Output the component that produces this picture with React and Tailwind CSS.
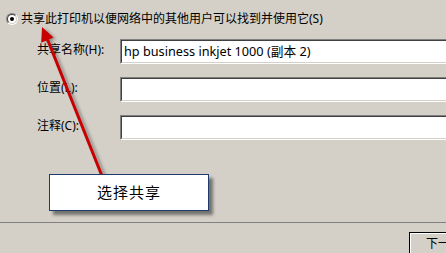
import React from "react";

const font = { fontFamily: '"Noto Sans", "Noto Sans CJK SC", sans-serif' };

function SunkenInput({ value }) {
  return (
    <div className="shrink-0 h-[25px] w-[340px] border-t border-l border-[#808080] border-b border-r border-b-white border-r-white">
      <div className="h-full w-full bg-white border-t border-l border-[#404040] border-b border-r border-b-[#d4d0c8] border-r-[#d4d0c8] flex items-center pl-[2px] text-[12.7px] text-black">
        {value}
      </div>
    </div>
  );
}

function Row({ label, value }) {
  return (
    <div className="flex items-center">
      <div className="shrink-0 w-[83px] text-[12px] text-black -mt-[3px]">{label}</div>
      <SunkenInput value={value} />
    </div>
  );
}

export default function App() {
  return (
    <div
      className="relative w-[446px] h-[253px] overflow-hidden bg-[#d4d0c8] text-black"
      style={font}
    >
      {/* share option */}
      <div className="flex items-center h-[16px] mt-[11px] pl-[6px] gap-[3px]">
        <div className="w-[12px] h-[12px] rounded-full border border-[#808080] border-b-white border-r-white">
          <div className="w-full h-full rounded-full bg-white border border-[#404040] border-b-[#d4d0c8] border-r-[#d4d0c8] flex items-center justify-center">
            <div className="w-[4px] h-[4px] rounded-full bg-black" />
          </div>
        </div>
        <span className="text-[12px] leading-none">共享此打印机以便网络中的其他用户可以找到并使用它(S)</span>
      </div>

      {/* fields */}
      <div className="flex flex-col gap-[13px] mt-[12px] pl-[37px]">
        <Row label="共享名称(H):" value="hp business inkjet 1000 (副本 2)" />
        <Row label="位置(L):" value="" />
        <Row label="注释(C):" value="" />
      </div>

      {/* separator */}
      <div className="mt-[82px] h-px bg-[#808080]" />

      {/* buttons */}
      <div className="pl-[409px] mt-[9px]">
        <div className="w-[70px] h-[23px] border border-black">
          <div className="w-full h-full border-t border-l border-white border-b border-r border-b-[#404040] border-r-[#404040] flex items-center justify-center text-[12px]">
            下一步
          </div>
        </div>
      </div>

      {/* annotation arrow */}
      <svg className="absolute left-0 top-0 pointer-events-none" width="446" height="253">
        <defs>
          <filter id="sh" x="-50%" y="-50%" width="200%" height="200%">
            <feGaussianBlur stdDeviation="1.5" />
          </filter>
        </defs>
        <g transform="translate(3,1)" opacity="0.45" filter="url(#sh)">
          <line x1="102" y1="176" x2="47.3" y2="40" stroke="#404040" strokeWidth="3" />
          <polygon points="42,27 52.8,37.7 41.7,42.3" fill="#404040" />
        </g>
        <line x1="102" y1="176" x2="47.3" y2="39" stroke="#c80000" strokeWidth="3" />
        <polygon points="42,27 53.5,37.5 41.2,42.7" fill="#c80000" />
      </svg>

      {/* callout */}
      <div className="absolute left-[49px] top-[174px] w-[160px] h-[37px] bg-white border border-[#1f3b6b] shadow-[4px_4px_3px_rgba(0,0,0,0.45)] flex items-center justify-center">
        <span className="text-[15px] text-black tracking-[1px]" style={{ fontFamily: '"Noto Sans CJK SC", sans-serif' }}>
          选择共享
        </span>
      </div>
    </div>
  );
}
